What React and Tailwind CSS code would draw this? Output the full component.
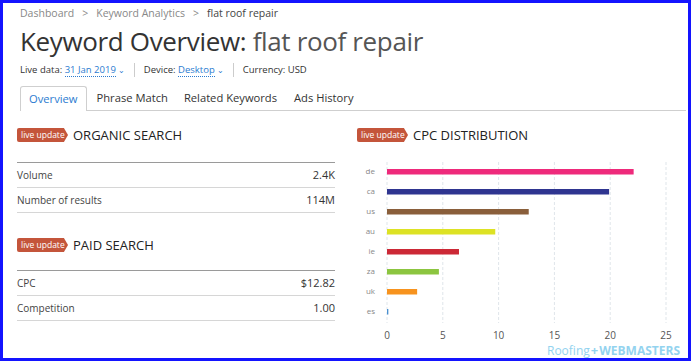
import React from "react";

const bars = [
  { k: "de", v: 22.1, c: "#ee2a7b" },
  { k: "ca", v: 19.9, c: "#2f3590" },
  { k: "us", v: 12.7, c: "#8a5f3b" },
  { k: "au", v: 9.7, c: "#dde224" },
  { k: "ie", v: 6.45, c: "#cc2936" },
  { k: "za", v: 4.65, c: "#8cc540" },
  { k: "uk", v: 2.7, c: "#f7931e" },
  { k: "es", v: 0.12, c: "#4a90d0" },
];

const Badge = () => (
  <span className="inline-flex items-center h-[14px] w-[51px] pl-[4px] rounded-l-[2px] bg-[#c4553b] text-white text-[8.5px] leading-none whitespace-nowrap [clip-path:polygon(0_0,92%_0,100%_50%,92%_100%,0_100%)]">
    live update
  </span>
);

const Heading = ({ children }) => (
  <div className="flex items-center gap-[5px] h-[14px]">
    <Badge />
    <span className="text-[13px] text-[#222] leading-none uppercase">{children}</span>
  </div>
);

const Row = ({ label, value }) => (
  <div className="flex justify-between items-center h-[25px] border-b border-[#d6d6d6] text-[10px] text-[#444]">
    <span>{label}</span>
    <span className="text-[11px] text-[#333]">{value}</span>
  </div>
);

const Chart = () => {
  const x0 = 30;
  const s = 11.16;
  return (
    <svg width="330" height="190" className="block">
      {[0, 5, 10, 15, 20, 25].map((t) => (
        <g key={t}>
          <line x1={x0 + t * s} x2={x0 + t * s} y1="9" y2="170" stroke="#dfe5ea" strokeDasharray="3 2" />
          <text x={x0 + t * s} y="186" fontSize="10" fill="#555" textAnchor="middle">{t}</text>
        </g>
      ))}
      {bars.map((b, i) => (
        <g key={b.k}>
          <text x="18" y={21 + i * 20} fontSize="8" fill="#888" textAnchor="end">{b.k}</text>
          <rect x={x0} y={16 + i * 20} width={Math.max(b.v * s, 1)} height="5.5" fill={b.c} />
        </g>
      ))}
    </svg>
  );
};

export default function App() {
  return (
    <div className="w-[692px] h-[364px] bg-white font-['Open_Sans',sans-serif]">
      <div className="relative w-[691px] h-[361px] border-[3px] border-[#1414ff] overflow-hidden">
        <div className="pl-[17px] pt-[4px]">
          <div className="flex items-center gap-[8px] text-[10.5px] text-[#888] h-[14px]">
            <span>Dashboard</span>
            <span>&gt;</span>
            <span>Keyword Analytics</span>
            <span>&gt;</span>
            <span className="text-[#444]">flat roof repair</span>
          </div>
          <h1 className="text-[26px] leading-none text-[#333] mt-[7px] tracking-[-0.35px]">
            Keyword Overview: <span className="text-[#555]">flat roof repair</span>
          </h1>
          <div className="flex items-center text-[9.5px] text-[#333] mt-[9px] h-[14px]">
            <span>Live data:&nbsp;</span>
            <span className="text-[#2b7bd0] border-b border-dotted border-[#2b7bd0] leading-[12px]">31 Jan 2019</span>
            <span className="text-[#2b7bd0] text-[8px] ml-[2px]">&#8964;</span>
            <span className="w-px h-[14px] bg-[#ccc] mx-[9px]" />
            <span>Device:&nbsp;</span>
            <span className="text-[#2b7bd0] border-b border-dotted border-[#2b7bd0] leading-[12px]">Desktop</span>
            <span className="text-[#2b7bd0] text-[8px] ml-[2px]">&#8964;</span>
            <span className="w-px h-[14px] bg-[#ccc] mx-[9px]" />
            <span>Currency: USD</span>
          </div>
          <div className="flex items-end mt-[9px] h-[25px] border-b border-[#cfcfcf] mr-[2px] text-[11.2px] text-[#333]">
            <div className="h-[25px] px-[8px] flex items-center border border-b-0 border-[#cfcfcf] rounded-t-[3px] bg-white text-[#2b7bd0] -mb-px">Overview</div>
            <div className="h-[24px] ml-[10px] flex items-center">Phrase Match</div>
            <div className="h-[24px] ml-[16px] flex items-center">Related Keywords</div>
            <div className="h-[24px] ml-[17px] flex items-center">Ads History</div>
          </div>
        </div>
        <div className="flex pl-[14px] pt-[17px]">
          <div className="w-[318px]">
            <Heading>Organic Search</Heading>
            <div className="mt-[20px] border-t border-[#9a9a9a]">
              <Row label="Volume" value="2.4K" />
              <Row label="Number of results" value="114M" />
            </div>
            <div className="mt-[25px]">
              <Heading>Paid Search</Heading>
            </div>
            <div className="mt-[18px] border-t border-[#9a9a9a]">
              <Row label="CPC" value="$12.82" />
              <Row label="Competition" value="1.00" />
            </div>
          </div>
          <div className="ml-[22px]">
            <Heading>CPC Distribution</Heading>
            <div className="mt-[11px]">
              <Chart />
            </div>
          </div>
        </div>
        <div className="absolute right-[8px] bottom-[1px] flex items-center text-[12px] leading-none text-[#93d3ef]">
          <span>Roofing</span>
          <span className="text-[13px] font-bold mx-[1px]">+</span>
          <span className="font-bold">WEBMASTERS</span>
        </div>
      </div>
    </div>
  );
}
